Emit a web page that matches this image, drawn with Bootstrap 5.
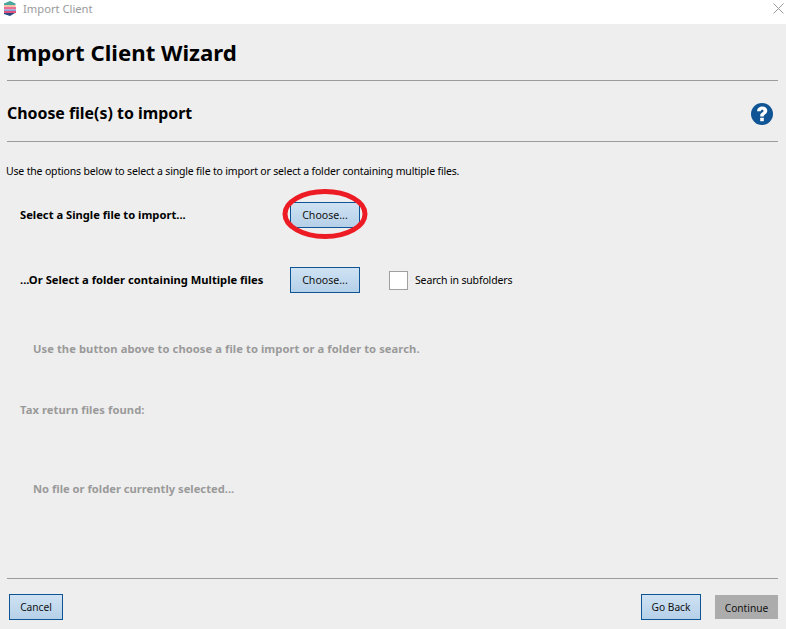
<!DOCTYPE html>
<html lang="en">
<head>
<meta charset="utf-8">
<title>Import Client</title>
<link href="https://cdn.jsdelivr.net/npm/bootstrap@5.3.0/dist/css/bootstrap.min.css" rel="stylesheet">
<style>
html,body{height:629px;overflow:hidden}
body{background:#eee;font-family:"Noto Sans",sans-serif;font-size:10.5px;color:#000;line-height:1.2}
.winbar{height:24px;background:#fff;padding:1px 2px 0 3px;color:#9a9a9a;font-size:11.2px}
.winbar-text{margin-left:6px;line-height:15px}
.winbar-x{margin-top:2px}
.wiz{height:605px;padding:0 8px 0 7px}
.wiz-title{font-size:22.2px;font-weight:700;height:57px;border-bottom:1px solid #9b9b9b;line-height:58px;margin:0}
.wiz-sub{height:61px;border-bottom:1px solid #9b9b9b;font-size:15.9px;font-weight:700;margin:0;padding-top:5px}
.helpicon{margin-right:4px}
.wiz-intro{margin:21px 0 0 -1px;height:16px;line-height:16px;font-size:10.5px;letter-spacing:-.17px}
.pick-row{padding-left:13px;height:26px}
.pick-first{margin-top:23px}
.pick-second{margin-top:39px}
.pick-label{width:270px;font-weight:700;font-size:11.2px}
.win-btn{border:1px solid #0f5596;border-radius:0;background:linear-gradient(#cfe2f3,#b5d0e8);color:#111;font-size:10.6px;padding:0;height:26px;line-height:24px;text-align:center}
.win-btn.wide{width:70px}
.win-btn.small{width:54px}
.win-btn.back{width:60px}
.win-btn.off{width:63px;height:24px;background:#acacac;border-color:#acacac;margin:1px 0 0 14px}
.foot .win-btn{font-size:10.2px}
.ringwrap{position:relative;display:inline-block;height:26px}
.ring{position:absolute;left:-8px;top:-15px;width:86px;height:54px;pointer-events:none}
.chk{width:19px;height:19px;background:#fff;border:1px solid #a0a0a0;margin:0 7px 0 29px}
.chk-text{letter-spacing:-.15px}
.dim{color:#9a9a9a;font-weight:700;font-size:11.2px}
.msg1{margin:49px 0 0 26px;letter-spacing:.07px}
.msg2{margin:48px 0 0 13px;letter-spacing:.08px}
.msg3{margin:65px 0 0 26px}
.foot{border-top:1px solid #9b9b9b;height:51px;margin-top:auto;padding:15px 0 0 2px}
</style>
</head>
<body>
<div class="winbar d-flex align-items-start">
  <svg width="14" height="15" viewBox="0 0 14 15" aria-hidden="true">
    <path d="M7 0l5.500 2.500V4H1V2.500z" fill="#47a79c"/>
    <rect x="1" y="4" width="11.500" height="2" fill="#f2c0a8"/>
    <rect x="1" y="6" width="12" height="2.500" fill="#ec6f96"/>
    <rect x="1" y="8.500" width="12" height="1.500" fill="#7fa6d8"/>
    <rect x="1" y="10" width="12" height="2" fill="#e2507f"/>
    <path d="M1 12h11L7 15l-6-2z" fill="#274a80"/>
  </svg>
  <span class="winbar-text">Import Client</span>
  <svg width="11" height="11" viewBox="0 0 11 11" class="ms-auto winbar-x" aria-hidden="true"><path d="M.5.500l10 10M10.500.500l-10 10" stroke="#9a9a9a" stroke-width="1" fill="none"/></svg>
</div>
<div class="wiz d-flex flex-column">
  <h1 class="wiz-title">Import Client Wizard</h1>
  <h2 class="wiz-sub d-flex align-items-center justify-content-between">
    <span>Choose file(s) to import</span>
    <svg width="24" height="24" viewBox="0 0 24 24" class="helpicon" aria-hidden="true">
      <circle cx="12" cy="12" r="11" fill="#0f5596"/>
      <path d="M7 9.200C7.200 6 9.500 4.500 12.300 4.500c3 0 5 1.700 5 4.300 0 2-1.200 2.900-2.300 3.700-.9.600-1.200 1-1.200 1.800v.3h-3.600v-.7c0-1.700.7-2.600 1.900-3.400.9-.6 1.400-1 1.400-1.600 0-.7-.5-1.100-1.200-1.100-.9 0-1.400.5-1.500 1.500z" fill="#fff"/>
      <rect x="10.200" y="15.700" width="3.600" height="3.500" rx=".5" fill="#fff"/>
    </svg>
  </h2>
  <p class="wiz-intro">Use the options below to select a single file to import or select a folder containing multiple files.</p>
  <div class="pick-row pick-first d-flex align-items-center">
    <span class="pick-label">Select a Single file to import...</span>
    <span class="ringwrap">
      <button type="button" class="win-btn wide">Choose...</button>
      <svg class="ring" viewBox="0 0 86 54" aria-hidden="true"><ellipse cx="43" cy="27" rx="40" ry="22.500" fill="none" stroke="#ed1c24" stroke-width="5"/></svg>
    </span>
  </div>
  <div class="pick-row pick-second d-flex align-items-center">
    <span class="pick-label">...Or Select a folder containing Multiple files</span>
    <button type="button" class="win-btn wide">Choose...</button>
    <span class="chk"></span>
    <span class="chk-text">Search in subfolders</span>
  </div>
  <div class="dim msg1">Use the button above to choose a file to import or a folder to search.</div>
  <div class="dim msg2">Tax return files found:</div>
  <div class="dim msg3">No file or folder currently selected...</div>
  <div class="foot d-flex align-items-start">
    <button type="button" class="win-btn small">Cancel</button>
    <button type="button" class="win-btn back ms-auto">Go Back</button>
    <button type="button" class="win-btn off">Continue</button>
  </div>
</div>
</body>
</html>
